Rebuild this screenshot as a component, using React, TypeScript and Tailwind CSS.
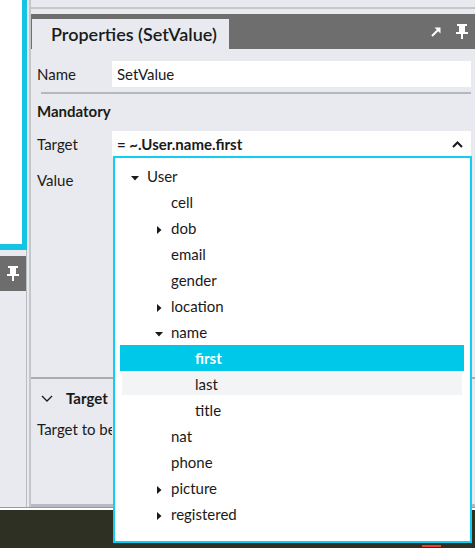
import React from 'react'

type Node = { label: string; level: number; arrow?: 'down' | 'right'; selected?: boolean; hover?: boolean }

const items: Node[] = [
  { label: 'User', level: 0, arrow: 'down' },
  { label: 'cell', level: 1 },
  { label: 'dob', level: 1, arrow: 'right' },
  { label: 'email', level: 1 },
  { label: 'gender', level: 1 },
  { label: 'location', level: 1, arrow: 'right' },
  { label: 'name', level: 1, arrow: 'down' },
  { label: 'first', level: 2, selected: true },
  { label: 'last', level: 2, hover: true },
  { label: 'title', level: 2 },
  { label: 'nat', level: 1 },
  { label: 'phone', level: 1 },
  { label: 'picture', level: 1, arrow: 'right' },
  { label: 'registered', level: 1, arrow: 'right' },
]

const pad = ['pl-[27px]', 'pl-[51px]', 'pl-[75px]']

function Pin({ className = '' }: { className?: string }) {
  return (
    <svg width="12" height="15" viewBox="0 0 12 15" className={className} fill="white">
      <rect x="1" y="0" width="10" height="2" />
      <rect x="3" y="2" width="6" height="6" />
      <rect x="0" y="8" width="12" height="2" />
      <rect x="5" y="10" width="2" height="5" />
    </svg>
  )
}

function Arrow({ dir }: { dir: 'down' | 'right' }) {
  return dir === 'down' ? (
    <svg width="8" height="5" viewBox="0 0 8 5" className="absolute left-[-16px] top-[11px]">
      <path d="M0 0 L8 0 L4 4.5 Z" fill="#1a1a1a" />
    </svg>
  ) : (
    <svg width="5" height="8" viewBox="0 0 5 8" className="absolute left-[-14px] top-[9px]">
      <path d="M0 0 L4.5 4 L0 8 Z" fill="#1a1a1a" />
    </svg>
  )
}

function rowClass(n: Node) {
  if (n.selected) return 'h-[26px] bg-[#00c8e9] text-white font-bold'
  if (n.hover) return 'h-[22px] m-[2px] bg-[#f3f4f6]'
  return 'h-[26px]'
}

export default function App() {
  return (
    <div className="relative w-[475px] h-[548px] overflow-hidden bg-[#e8eaef] text-[15px] text-[#1a1a1a] font-['Segoe_UI','Lato',sans-serif]">
      <div className="flex h-[507px]">
        {/* left docked window */}
        <div className="w-[27px] flex flex-col border-r border-[#b9bcc1]">
          <div className="h-[250px] w-[27px] bg-white border-r-[5px] border-b-[6px] border-[#17c3e3]" />
          <div className="mt-[6px] h-[35px] w-[26px] bg-[#6d6d6d] flex items-center justify-center">
            <Pin />
          </div>
        </div>
        <div className="w-[4px] border-r-2 border-[#c3c6cb]" />

        {/* main panel */}
        <div className="flex-1 flex flex-col">
          <div className="h-[9px] border-b-2 border-[#c5c8cd]" />
          <div className="mt-[5px] h-[35px] bg-[#6e6e6e] flex items-end pl-px">
            <div className="h-[30px] w-[197px] bg-[#e8eaef] flex items-center pl-[19px] text-[18px] font-semibold">
              Properties (SetValue)
            </div>
            <div className="flex-1 h-full flex items-center justify-end gap-[14px] pr-[7px]">
              <svg width="11" height="11" viewBox="0 0 11 11">
                <path d="M1 10 L7 4" stroke="white" strokeWidth="2" />
                <path d="M3.5 1.5 L9.5 1.5 L9.5 7.5 Z" fill="white" />
              </svg>
              <Pin />
            </div>
          </div>

          <div className="mt-[12px] flex items-center h-[26px] pl-[6px] pr-[4px]">
            <div className="w-[75px]">Name</div>
            <div className="flex-1 h-full bg-white flex items-center pl-[5px]">SetValue</div>
          </div>
          <div className="mt-[5px] ml-[10px] mr-[4px] h-[2px] bg-[#b4b7bc]" />
          <div className="mt-[7px] pl-[6px] h-[20px] flex items-center font-bold">Mandatory</div>
          <div className="mt-[10px] flex items-center h-[26px] pl-[6px] pr-[4px]">
            <div className="w-[75px]">Target</div>
            <div className="flex-1 h-full bg-white flex items-center pl-[5px] pr-[8px] font-bold">
              <span className="flex-1">= ~.User.name.first</span>
              <svg width="11" height="7" viewBox="0 0 11 7">
                <path d="M1 6 L5.5 1.5 L10 6" stroke="#1a1a1a" strokeWidth="2" fill="none" />
              </svg>
            </div>
          </div>
          <div className="mt-[13px] pl-[6px] h-[20px] flex items-center">Value</div>

          <div className="flex-1" />

          {/* description area */}
          <div className="h-[130px] border-t-2 border-[#a9acb1] border-b-[3px] border-b-[#b7bac0] flex flex-col">
            <div className="mt-[9px] h-[20px] flex items-center pl-[10px]">
              <svg width="12" height="7" viewBox="0 0 12 7" className="mr-[13px]">
                <path d="M1 1 L6 6 L11 1" stroke="#1a1a1a" strokeWidth="1.3" fill="none" />
              </svg>
              <span className="font-bold">Target</span>
            </div>
            <div className="mt-[10px] pl-[6px] w-[81px] overflow-hidden whitespace-nowrap">Target to be assigned</div>
          </div>
        </div>
      </div>

      {/* taskbar */}
      <div className="h-px bg-[#2bc4e4]" />
      <div className="h-[2px] bg-white" />
      <div className="h-[38px] bg-[#2e3023] flex items-end">
        <div className="ml-[422px] mb-px h-[2px] w-[19px] bg-[#e8402e]" />
      </div>

      {/* dropdown popup */}
      <div className="absolute left-[113px] top-[156px] w-[359px] h-[387px] bg-white border-2 border-[#10cff3] pt-[5px] pl-[5px] pr-[6px]">
        {items.map((n) => (
          <div key={n.label} className={`flex items-center ${pad[n.level]} ${rowClass(n)}`}>
            <span className={`relative ${n.hover ? '-ml-[2px]' : ''}`}>
              {n.arrow && <Arrow dir={n.arrow} />}
              {n.label}
            </span>
          </div>
        ))}
      </div>
    </div>
  )
}
